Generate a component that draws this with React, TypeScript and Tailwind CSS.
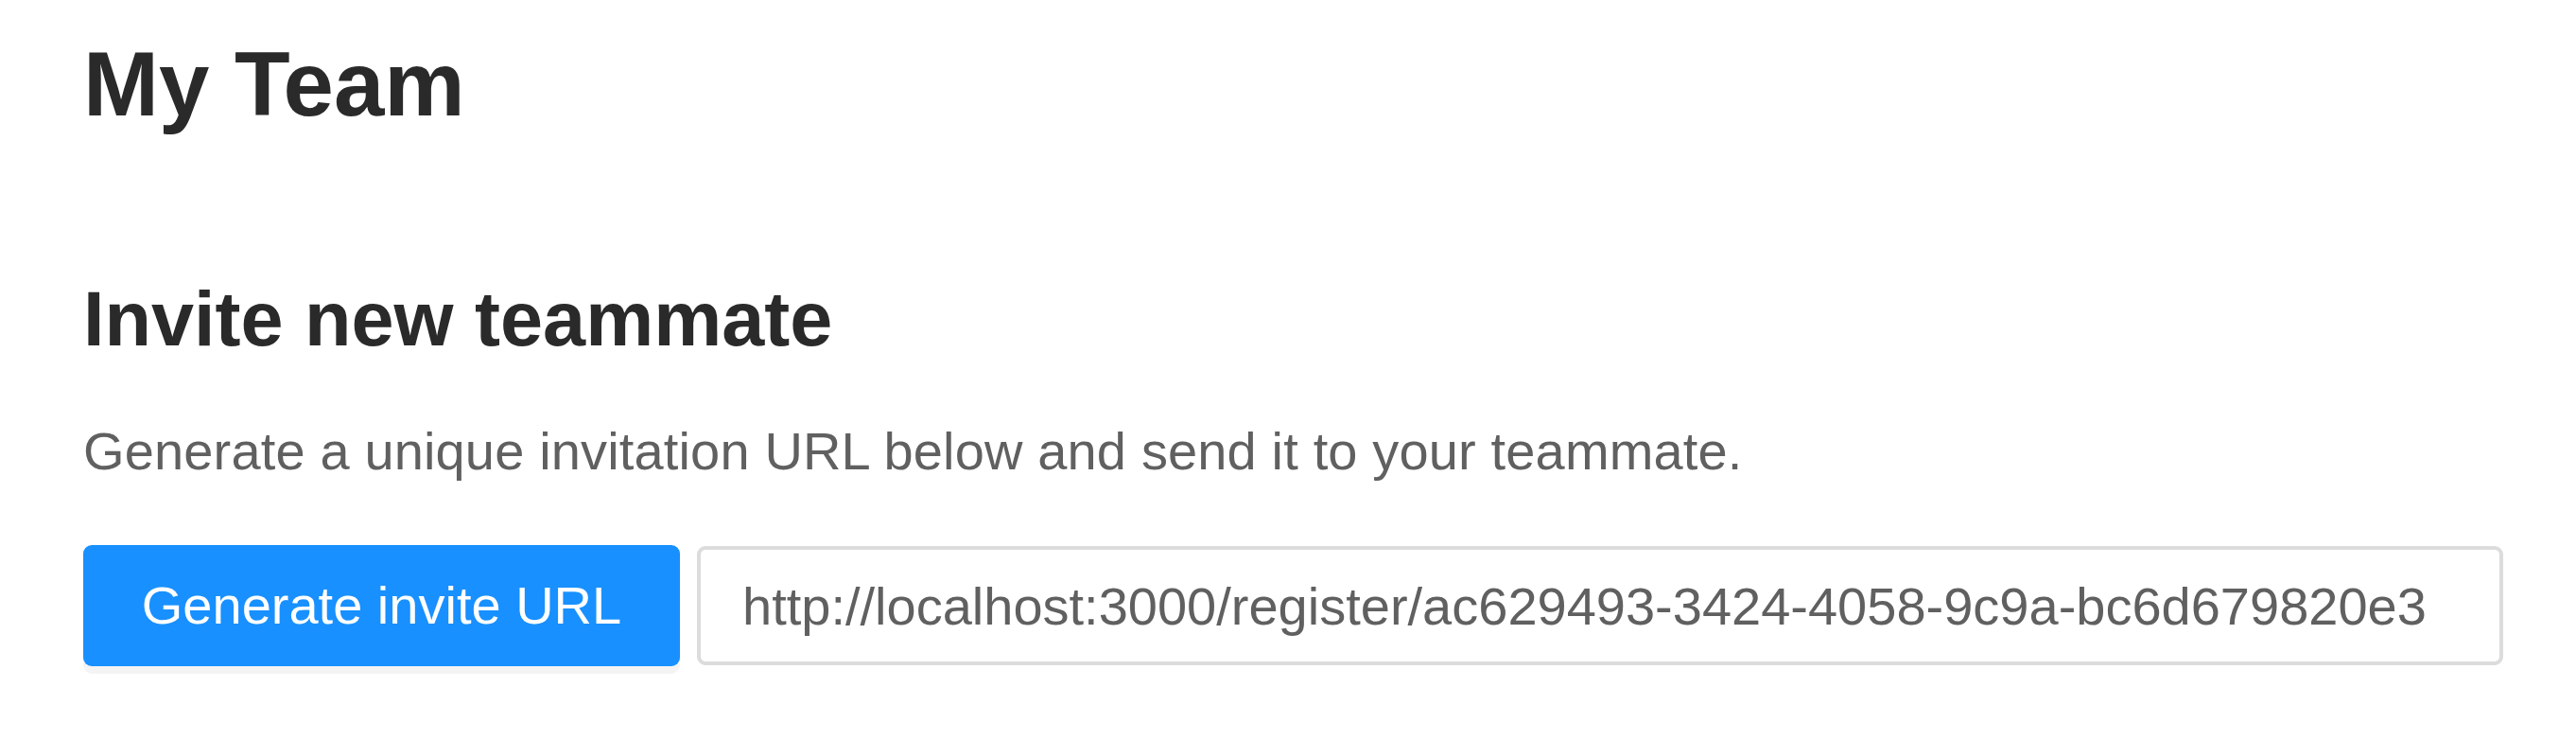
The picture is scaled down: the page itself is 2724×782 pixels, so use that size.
import { useState } from "react";

export default function App() {
  const [inviteUrl] = useState(
    "http://localhost:3000/register/ac629493-3424-4058-9c9a-bc6d679820e3"
  );

  return (
    <main className="min-h-[782px] w-full bg-white pl-[88px] pr-[77px] font-['Liberation_Sans',Arial,sans-serif]">
      <h1 className="pt-[41px] text-[96px] font-bold leading-none text-[#2a2a2a]">
        My Team
      </h1>

      <section className="mt-[160px]">
        <h2 className="text-[81px] font-bold leading-none text-[#2a2a2a]">
          Invite new teammate
        </h2>
        <p className="mt-[71px] text-[56px] leading-none tracking-[0.15px] text-[#606060]">
          Generate a unique invitation URL below and send it to your teammate.
        </p>

        <div className="mt-[71px] flex items-center gap-[18px]">
          <button
            type="button"
            className="flex h-[128px] w-[631px] shrink-0 items-center justify-center rounded-[9px] bg-[#1890ff] text-[56px] leading-none text-white shadow-[0_8px_0_rgba(0,0,0,0.045)]"
          >
            Generate invite URL
          </button>
          <input
            readOnly
            value={inviteUrl}
            className="h-[126px] min-w-0 flex-1 rounded-[9px] border-[4px] border-[#dcdcdc] bg-white px-[44px] text-[56px] leading-none text-[#606060] outline-none"
          />
        </div>
      </section>
    </main>
  );
}
